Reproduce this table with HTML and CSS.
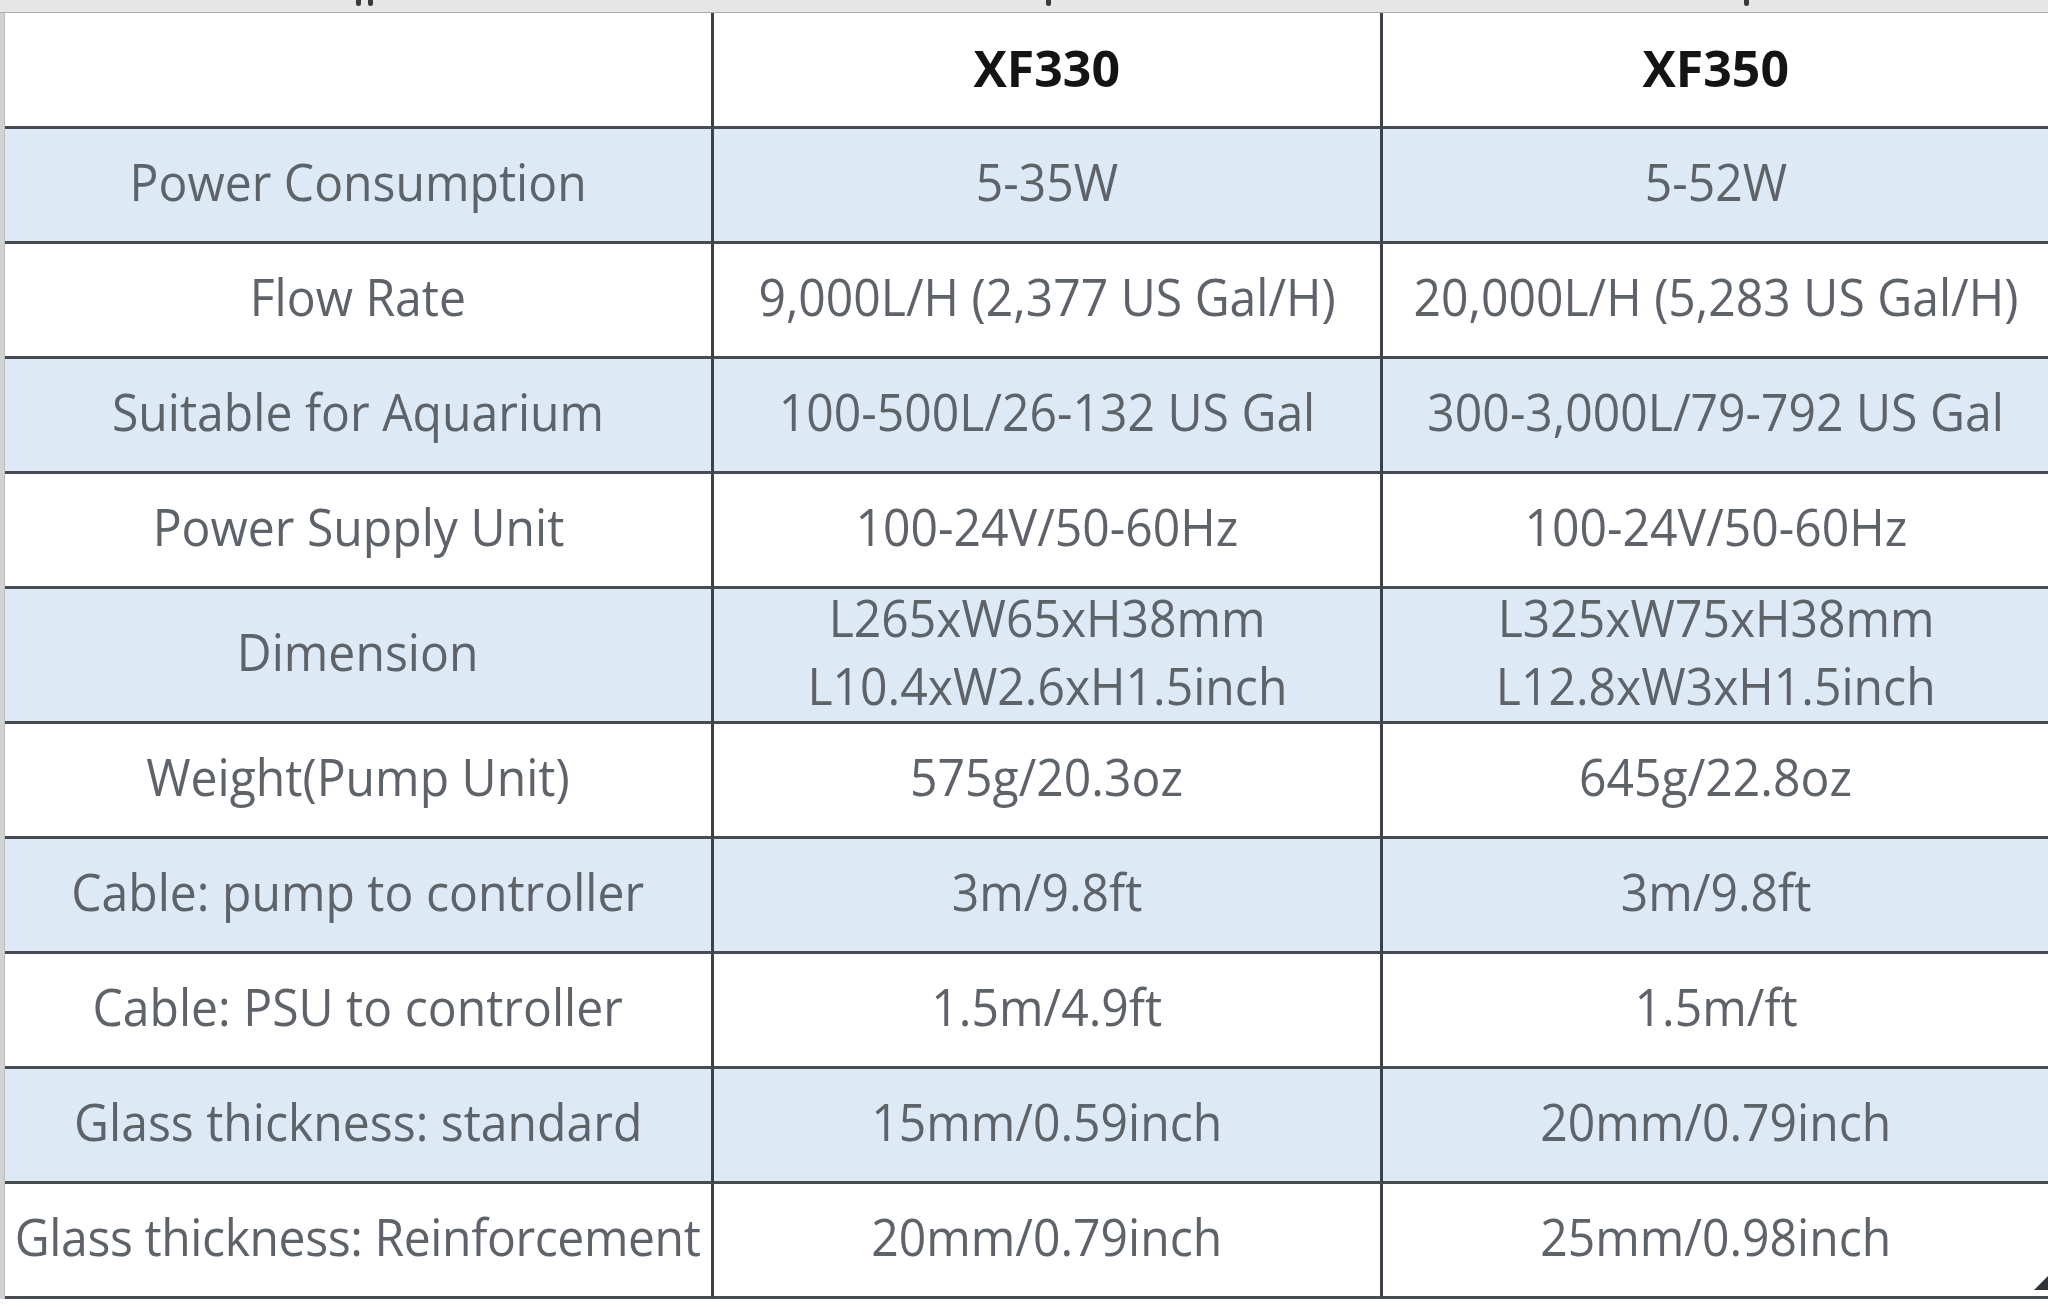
FILE: index.html
```html
<!DOCTYPE html>
<html lang="en">
<head>
<meta charset="utf-8">
<title>XF330 / XF350 specifications</title>
<link rel="stylesheet" href="styles.css">
</head>
<body>
<div class="sheet">
  <div class="topband">
    <span class="mark mark-a"></span>
    <span class="mark mark-a2"></span>
    <span class="mark mark-b"></span>
    <span class="mark mark-c"></span>
  </div>
  <div class="body">
    <div class="leftstrip"></div>
    <div class="grid">
      <div class="cell head"></div>
      <div class="cell head"><span class="t">XF330</span></div>
      <div class="cell head"><span class="t">XF350</span></div>

      <div class="cell blue"><span class="t">Power Consumption</span></div>
      <div class="cell blue"><span class="t">5-35W</span></div>
      <div class="cell blue"><span class="t">5-52W</span></div>

      <div class="cell"><span class="t">Flow Rate</span></div>
      <div class="cell"><span class="t">9,000L/H (2,377 US Gal/H)</span></div>
      <div class="cell"><span class="t">20,000L/H (5,283 US Gal/H)</span></div>

      <div class="cell blue"><span class="t">Suitable for Aquarium</span></div>
      <div class="cell blue"><span class="t">100-500L/26-132 US Gal</span></div>
      <div class="cell blue"><span class="t">300-3,000L/79-792 US Gal</span></div>

      <div class="cell"><span class="t">Power Supply Unit</span></div>
      <div class="cell"><span class="t">100-24V/50-60Hz</span></div>
      <div class="cell"><span class="t">100-24V/50-60Hz</span></div>

      <div class="cell blue"><span class="t">Dimension</span></div>
      <div class="cell blue two"><span class="t">L265xW65xH38mm</span><span class="t">L10.4xW2.6xH1.5inch</span></div>
      <div class="cell blue two"><span class="t">L325xW75xH38mm</span><span class="t">L12.8xW3xH1.5inch</span></div>

      <div class="cell"><span class="t">Weight(Pump Unit)</span></div>
      <div class="cell"><span class="t">575g/20.3oz</span></div>
      <div class="cell"><span class="t">645g/22.8oz</span></div>

      <div class="cell blue"><span class="t">Cable: pump to controller</span></div>
      <div class="cell blue"><span class="t">3m/9.8ft</span></div>
      <div class="cell blue"><span class="t">3m/9.8ft</span></div>

      <div class="cell"><span class="t">Cable: PSU to controller</span></div>
      <div class="cell"><span class="t">1.5m/4.9ft</span></div>
      <div class="cell"><span class="t">1.5m/ft</span></div>

      <div class="cell blue"><span class="t">Glass thickness: standard</span></div>
      <div class="cell blue"><span class="t">15mm/0.59inch</span></div>
      <div class="cell blue"><span class="t">20mm/0.79inch</span></div>

      <div class="cell"><span class="t fit">Glass thickness: Reinforcement</span></div>
      <div class="cell"><span class="t">20mm/0.79inch</span></div>
      <div class="cell"><span class="t">25mm/0.98inch</span></div>
    </div>
    <span class="handle"></span>
  </div>
</div>
</body>
</html>
```

FILE: styles.css
```css
html, body {
  margin: 0;
  padding: 0;
  background: #ffffff;
}

.sheet {
  width: 2048px;
  height: 1307px;
  overflow: hidden;
  font-family: "Open Sans", "Noto Sans", sans-serif;
}

.topband {
  position: relative;
  height: 12px;
  background: #e6e6e6;
  border-bottom: 1px solid #a9abad;
}

.mark {
  position: absolute;
  top: 0;
  height: 6px;
  background: #3a3d40;
  border-radius: 0 0 3px 3px;
}
.mark-a { left: 356px; width: 5px; }
.mark-a2 { left: 368px; width: 5px; }
.mark-b { left: 1046px; width: 5px; }
.mark-c { left: 1744px; width: 5px; }

.body {
  position: relative;
  display: flex;
}

.leftstrip {
  width: 5px;
  flex: none;
  background: #d2d2d2;
  border-right: 1px solid #bdbdbd;
  box-sizing: border-box;
}

.grid {
  display: grid;
  grid-template-columns: 709px 669px 669px;
  grid-template-rows: 116px repeat(4, 115px) 135px repeat(5, 115px);
  flex: none;
}

.cell {
  box-sizing: border-box;
  border-bottom: 3px solid #474c52;
  border-right: 3px solid #3d4248;
  display: flex;
  flex-direction: column;
  align-items: center;
  justify-content: center;
  color: #5e6369;
  font-size: 52px;
  line-height: 68px;
  white-space: nowrap;
  background: #ffffff;
  padding-bottom: 8px;
}

.cell.blue {
  background: #dde9f5;
}

.t {
  display: inline-block;
  transform: scaleX(0.925);
}

.t.fit {
  letter-spacing: -0.45px;
}

.head {
  color: #141414;
  font-weight: 700;
  font-size: 51px;
  padding-bottom: 6px;
}

.head .t {
  transform: scaleX(0.98);
}

.two {
  padding-bottom: 8px;
}

.handle {
  position: absolute;
  right: 0;
  bottom: 9px;
  width: 0;
  height: 0;
  border-left: 14px solid transparent;
  border-bottom: 14px solid #2f3338;
}
```
